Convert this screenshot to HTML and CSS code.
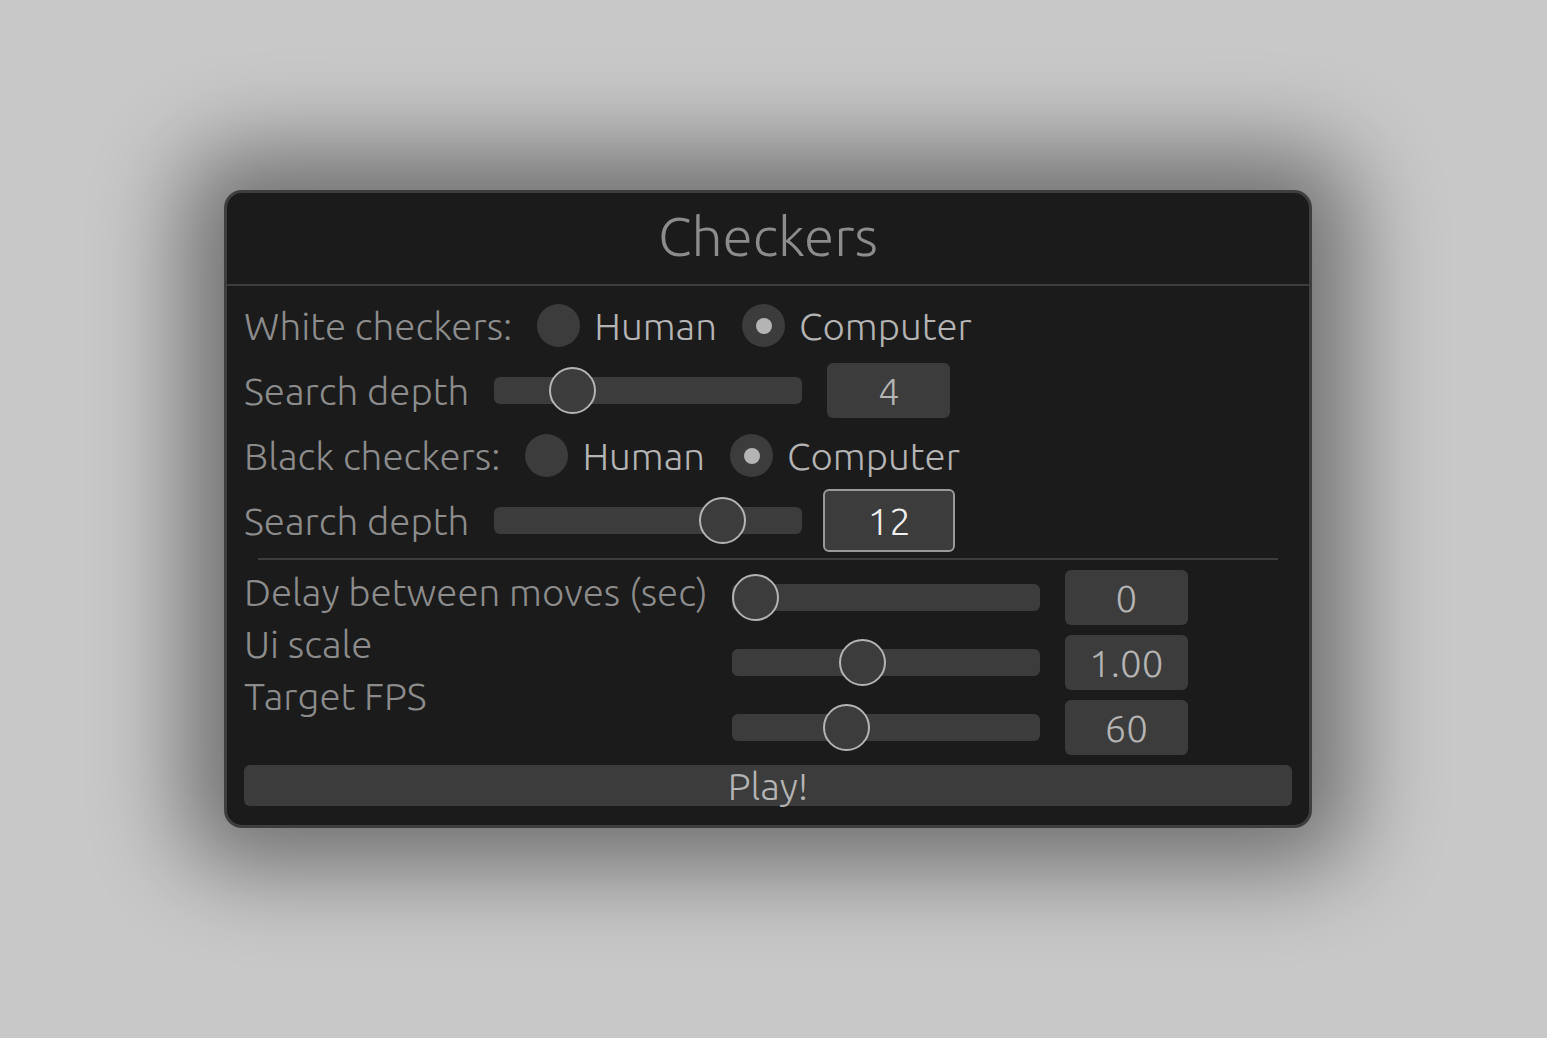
FILE: index.html
```html
<!DOCTYPE html>
<html>
<head>
<meta charset="utf-8">
<link rel="stylesheet" href="styles.css">
</head>
<body>
<div class="window">
  <div class="titlebar">Checkers</div>
  <div class="content">
    <div class="row">
      <span class="label">White checkers:</span>
      <span class="radio"></span><span class="opt">Human</span>
      <span class="radio on"></span><span class="opt">Computer</span>
    </div>
    <div class="row">
      <span class="label">Search depth</span>
      <div class="track"><span class="thumb" style="left: 55px"></span></div>
      <span class="value">4</span>
    </div>
    <div class="row">
      <span class="label">Black checkers:</span>
      <span class="radio"></span><span class="opt">Human</span>
      <span class="radio on"></span><span class="opt">Computer</span>
    </div>
    <div class="row">
      <span class="label">Search depth</span>
      <div class="track"><span class="thumb" style="left: 205px"></span></div>
      <span class="value active">12</span>
    </div>
    <div class="sep"></div>
    <div class="grid">
      <div class="labels">
        <span class="label">Delay between moves (sec)</span>
        <span class="label">Ui scale</span>
        <span class="label">Target FPS</span>
      </div>
      <div class="controls">
        <div class="row">
          <div class="track"><span class="thumb" style="left: 0px"></span></div>
          <span class="value">0</span>
        </div>
        <div class="row">
          <div class="track"><span class="thumb" style="left: 107px"></span></div>
          <span class="value">1.00</span>
        </div>
        <div class="row">
          <div class="track"><span class="thumb" style="left: 91px"></span></div>
          <span class="value">60</span>
        </div>
      </div>
    </div>
    <div class="play">Play!</div>
  </div>
</div>
</body>
</html>
```
FILE: styles.css
```css
html, body {
  margin: 0;
  padding: 0;
}
body {
  background: #c8c8c8;
  width: 1547px;
  height: 1038px;
  overflow: hidden;
  padding: 190px 0 0 224px;
  box-sizing: border-box;
  font-family: "Ubuntu", "Lato", "Open Sans", sans-serif;
  font-weight: 300;
  font-size: 38.5px;
  color: #8c8c8c;
}
.window {
  width: 1088px;
  height: 638px;
  box-sizing: border-box;
  background: #1b1b1b;
  border: 3px solid #3e3e3e;
  border-radius: 18px;
  box-shadow: 0 0 90px 40px rgba(0, 0, 0, 0.44);
  display: flex;
  flex-direction: column;
}
.titlebar {
  height: 93px;
  border-bottom: 2px solid #3c3c3c;
  display: flex;
  align-items: center;
  justify-content: center;
  font-size: 55px;
  color: #8c8c8c;
  box-sizing: border-box;
  padding-bottom: 6px;
}
.content {
  padding: 12px 17px 0 17px;
  display: flex;
  flex-direction: column;
}
.row {
  height: 55px;
  display: flex;
  align-items: center;
  margin-bottom: 10px;
}
.label {
  white-space: nowrap;
}
.radio {
  width: 43px;
  height: 43px;
  border-radius: 50%;
  background: #3c3c3c;
  margin-left: 25px;
  margin-right: 14px;
  display: flex;
  align-items: center;
  justify-content: center;
  flex: none;
}
.opt + .radio {
  margin-left: 25px;
}
.radio.on::after {
  content: "";
  width: 16px;
  height: 16px;
  border-radius: 50%;
  background: #b4b4b4;
}
.opt {
  color: #b4b4b4;
}
.track {
  position: relative;
  width: 308px;
  height: 27px;
  border-radius: 6px;
  background: #3c3c3c;
  margin-left: 25px;
  flex: none;
}
.controls .track {
  margin-left: 24px;
}
.thumb {
  position: absolute;
  top: 50%;
  width: 47px;
  height: 47px;
  margin-top: -23.5px;
  box-sizing: border-box;
  border: 2.5px solid #b4b4b4;
  border-radius: 50%;
  background: #3c3c3c;
}
.value {
  width: 123px;
  height: 55px;
  margin-left: 25px;
  border-radius: 6px;
  background: #3c3c3c;
  color: #b4b4b4;
  display: flex;
  align-items: center;
  justify-content: center;
  flex: none;
  box-sizing: border-box;
}
.value.active {
  width: 132px;
  height: 63px;
  margin: -4px -4px -4px 21px;
  border: 2.5px solid #999999;
  color: #f0f0f0;
}
.sep {
  height: 2px;
  background: #3c3c3c;
  margin: 0 14px 10px 14px;
}
.grid {
  display: flex;
}
.labels {
  display: flex;
  flex-direction: column;
  gap: 8px;
}
.labels .label {
  height: 44px;
  line-height: 44px;
}
.controls .row {
  margin-bottom: 10px;
}
.play {
  height: 41px;
  border-radius: 6px;
  background: #3c3c3c;
  color: #b4b4b4;
  display: flex;
  align-items: center;
  justify-content: center;
}
```
